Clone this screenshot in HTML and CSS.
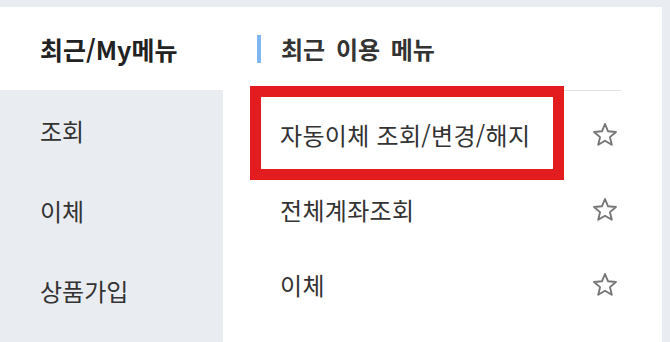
FILE: index.html
```html
<!DOCTYPE html>
<html lang="ko">
<head>
<meta charset="utf-8">
<title>최근/My메뉴</title>
<link rel="stylesheet" href="styles.css">
</head>
<body>
<div class="panel">
  <aside class="sidebar">
    <div class="tab">최근/My메뉴</div>
    <ul class="side-list">
      <li>조회</li>
      <li>이체</li>
      <li>상품가입</li>
    </ul>
  </aside>
  <main class="content">
    <h2 class="title"><span class="bar"></span>최근 이용 메뉴</h2>
    <ul class="menu-list">
      <li class="row"><span>자동이체 조회/변경/해지</span><svg class="star" viewBox="0 0 26 26" width="26" height="26"><polygon points="13,2 16.06,9.29 23.94,9.95 17.95,15.11 19.76,22.8 13,18.7 6.24,22.8 8.05,15.11 2.06,9.95 9.94,9.29"/></svg></li>
      <li class="row"><span>전체계좌조회</span><svg class="star" viewBox="0 0 26 26" width="26" height="26"><polygon points="13,2 16.06,9.29 23.94,9.95 17.95,15.11 19.76,22.8 13,18.7 6.24,22.8 8.05,15.11 2.06,9.95 9.94,9.29"/></svg></li>
      <li class="row"><span>이체</span><svg class="star" viewBox="0 0 26 26" width="26" height="26"><polygon points="13,2 16.06,9.29 23.94,9.95 17.95,15.11 19.76,22.8 13,18.7 6.24,22.8 8.05,15.11 2.06,9.95 9.94,9.29"/></svg></li>
      <li class="highlight"></li>
    </ul>
  </main>
</div>
</body>
</html>
```
FILE: styles.css
```css
* { box-sizing: border-box; }
html, body { margin: 0; padding: 0; }
body {
  background: #e9ecf0;
  font-family: "Noto Sans CJK KR", "Noto Sans", sans-serif;
  color: #333;
  height: 342px;
  overflow: hidden;
}
.panel {
  margin: 7px 8px 0 0;
  height: 335px;
  background: #fff;
  display: flex;
}
.sidebar {
  width: 223px;
  display: flex;
  flex-direction: column;
}
.tab {
  height: 83px;
  display: flex;
  align-items: center;
  padding-left: 40px;
  font-size: 25px;
  font-weight: 700;
  color: #222;
}
.side-list {
  list-style: none;
  margin: 0;
  padding: 0;
  flex: 1;
  background: #e9ecf0;
}
.side-list li {
  height: 80px;
  display: flex;
  align-items: center;
  padding-left: 40px;
  font-size: 24px;
  color: #333;
}
.content {
  flex: 1;
  display: flex;
  flex-direction: column;
}
.title {
  margin: 0;
  height: 83px;
  display: flex;
  align-items: center;
  padding-left: 34px;
  font-size: 24px;
  font-weight: 700;
  color: #333;
  word-spacing: 4px;
}
.bar {
  width: 4px;
  height: 28px;
  background: #80b6ef;
  margin-right: 20px;
}
.menu-list {
  position: relative;
  list-style: none;
  margin: 0 0 0 27px;
  padding: 6px 0 0;
  width: 371px;
  border-top: 1px solid #dfe2e6;
}
.row {
  height: 75px;
  display: flex;
  align-items: center;
  justify-content: space-between;
  padding: 0 3px 0 30px;
  font-size: 24px;
  color: #333;
  letter-spacing: 0.3px;
}
.star {
  fill: none;
  stroke: #767676;
  stroke-width: 1.9;
  stroke-linejoin: round;
}
.highlight {
  position: absolute;
  left: 0;
  top: -5px;
  width: 314px;
  height: 94px;
  border: 11px solid #e31c1f;
}
```
